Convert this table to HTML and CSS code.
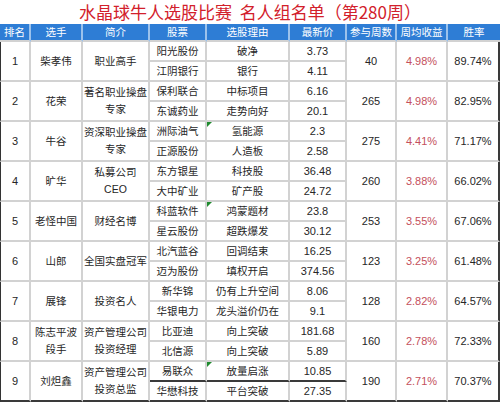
FILE: index.html
```html
<!DOCTYPE html>
<html lang="zh-CN">
<head>
<meta charset="UTF-8" />
<meta name="viewport" content="width=device-width, initial-scale=1" />
<title>水晶球牛人选股比赛 名人组名单</title>
<link rel="stylesheet" href="styles.css">
</head>
<body>

<div class="sheet">
  <div class="title">水晶球牛人选股比赛&nbsp;&nbsp;名人组名单（第280周）</div>
  <table class="list">
    <colgroup>
      <col class="c-rank"><col class="c-name"><col class="c-intro"><col class="c-stock"><col class="c-reason">
      <col class="c-price"><col class="c-weeks"><col class="c-gain"><col class="c-rate">
    </colgroup>
    <thead>
      <tr>
        <th>排名</th><th>选手</th><th>简介</th><th>股票</th><th>选股理由</th>
        <th>最新价</th><th>参与周数</th><th>周均收益</th><th class="last">胜率</th>
      </tr>
    </thead>
    <tbody>
      <tr>
        <td class="rank" rowspan="2">1</td><td rowspan="2">柴孝伟</td><td rowspan="2">职业高手</td>
        <td>阳光股份</td><td>破净</td><td class="num">3.73</td>
        <td class="num" rowspan="2">40</td><td class="gain" rowspan="2">4.98%</td><td class="rate" rowspan="2">89.74%</td>
      </tr>
      <tr><td>江阴银行</td><td>银行</td><td class="num">4.11</td></tr>

      <tr>
        <td class="rank" rowspan="2">2</td><td rowspan="2">花荣</td><td class="intro" rowspan="2">著名职业操盘<br>专家</td>
        <td>保利联合</td><td>中标项目</td><td class="num">6.16</td>
        <td class="num" rowspan="2">265</td><td class="gain" rowspan="2">4.98%</td><td class="rate" rowspan="2">82.95%</td>
      </tr>
      <tr><td>东诚药业</td><td>走势向好</td><td class="num">20.1</td></tr>

      <tr>
        <td class="rank" rowspan="2">3</td><td rowspan="2">牛谷</td><td class="intro" rowspan="2">资深职业操盘<br>专家</td>
        <td>洲际油气</td><td class="note">氢能源</td><td class="num">2.3</td>
        <td class="num" rowspan="2">275</td><td class="gain" rowspan="2">4.41%</td><td class="rate" rowspan="2">71.17%</td>
      </tr>
      <tr><td>正源股份</td><td>人造板</td><td class="num">2.58</td></tr>

      <tr>
        <td class="rank" rowspan="2">4</td><td rowspan="2">旷华</td><td class="intro" rowspan="2">私募公司<br>CEO</td>
        <td>东方银星</td><td>科技股</td><td class="num">36.48</td>
        <td class="num" rowspan="2">260</td><td class="gain" rowspan="2">3.88%</td><td class="rate" rowspan="2">66.02%</td>
      </tr>
      <tr><td>大中矿业</td><td>矿产股</td><td class="num">24.72</td></tr>

      <tr>
        <td class="rank" rowspan="2">5</td><td rowspan="2">老怪中国</td><td rowspan="2">财经名博</td>
        <td>科蓝软件</td><td class="note">鸿蒙题材</td><td class="num">23.8</td>
        <td class="num" rowspan="2">253</td><td class="gain" rowspan="2">3.55%</td><td class="rate" rowspan="2">67.06%</td>
      </tr>
      <tr><td>星云股份</td><td>超跌爆发</td><td class="num">30.12</td></tr>

      <tr>
        <td class="rank" rowspan="2">6</td><td rowspan="2">山郎</td><td rowspan="2">全国实盘冠军</td>
        <td>北汽蓝谷</td><td>回调结束</td><td class="num">16.25</td>
        <td class="num" rowspan="2">123</td><td class="gain" rowspan="2">3.25%</td><td class="rate" rowspan="2">61.48%</td>
      </tr>
      <tr><td>迈为股份</td><td>填权开启</td><td class="num">374.56</td></tr>

      <tr>
        <td class="rank" rowspan="2">7</td><td rowspan="2">展锋</td><td rowspan="2">投资名人</td>
        <td>新华锦</td><td>仍有上升空间</td><td class="num">8.06</td>
        <td class="num" rowspan="2">128</td><td class="gain" rowspan="2">2.82%</td><td class="rate" rowspan="2">64.57%</td>
      </tr>
      <tr><td>华银电力</td><td>龙头溢价仍在</td><td class="num">9.1</td></tr>

      <tr>
        <td class="rank" rowspan="2">8</td><td class="intro" rowspan="2">陈志平波<br>段手</td><td class="intro" rowspan="2">资产管理公司<br>投资经理</td>
        <td>比亚迪</td><td>向上突破</td><td class="num">181.68</td>
        <td class="num" rowspan="2">160</td><td class="gain" rowspan="2">2.78%</td><td class="rate" rowspan="2">72.33%</td>
      </tr>
      <tr><td>北信源</td><td>向上突破</td><td class="num">5.89</td></tr>

      <tr class="end">
        <td class="rank" rowspan="2">9</td><td rowspan="2">刘炟鑫</td><td class="intro" rowspan="2">资产管理公司<br>投资总监</td>
        <td>易联众</td><td class="note">放量启涨</td><td class="num">10.85</td>
        <td class="num" rowspan="2">190</td><td class="gain" rowspan="2">2.71%</td><td class="rate" rowspan="2">70.37%</td>
      </tr>
      <tr class="end"><td>华懋科技</td><td>平台突破</td><td class="num">27.35</td></tr>
    </tbody>
  </table>
</div>

</body>
</html>
```

FILE: styles.css
```css
body {
  margin: 0;
  background: #fff;
  font-family: "Liberation Sans", "Noto Sans CJK SC", sans-serif;
  color: #262626;
}
.sheet {
  width: 500px;
}
.title {
  height: 24px;
  line-height: 23px;
  text-align: center;
  font-size: 17px;
  color: #d2202b;
  font-family: "Noto Sans CJK SC", sans-serif;
  white-space: nowrap;
}
.list {
  width: 500px;
  table-layout: fixed;
  border-collapse: separate;
  border-spacing: 0;
  font-size: 10.5px;
}
.c-rank { width: 31px; }
.c-name { width: 52px; }
.c-intro { width: 67px; }
.c-stock { width: 57px; }
.c-reason { width: 83px; }
.c-price { width: 57px; }
.c-weeks { width: 50px; }
.c-gain { width: 51px; }
.c-rate { width: 52px; }

.list th {
  height: 16px;
  padding: 0;
  background: #2e7dd5;
  color: #fff;
  font-weight: normal;
  line-height: 16px;
  border-right: 2px solid #9cc2ec;
  border-bottom: 2px solid #d2d2d2;
}
.list th.last {
  border-right: none;
}
.list td {
  height: 18px;
  padding: 0;
  line-height: 18px;
  text-align: center;
  white-space: nowrap;
  border-right: 2px solid #d2d2d2;
  border-bottom: 2px solid #d2d2d2;
}
.list td.num,
.list td.gain,
.list td.rate,
.list td.rank {
  font-size: 11px;
}
.list td.rank {
  border-left: 1px solid #333;
}
.list td.rate {
  border-right: 2px solid #3a3a3a;
}
.list tr.end td {
  border-bottom-color: #3a3a3a;
}
.list td.intro {
  line-height: 17px;
}
.list td.gain {
  color: #c4505c;
}
.list td.note {
  position: relative;
}
.list td.note::before {
  content: "";
  position: absolute;
  left: 0;
  top: 0;
  border-top: 5px solid #1f8a2e;
  border-right: 5px solid transparent;
}
```
